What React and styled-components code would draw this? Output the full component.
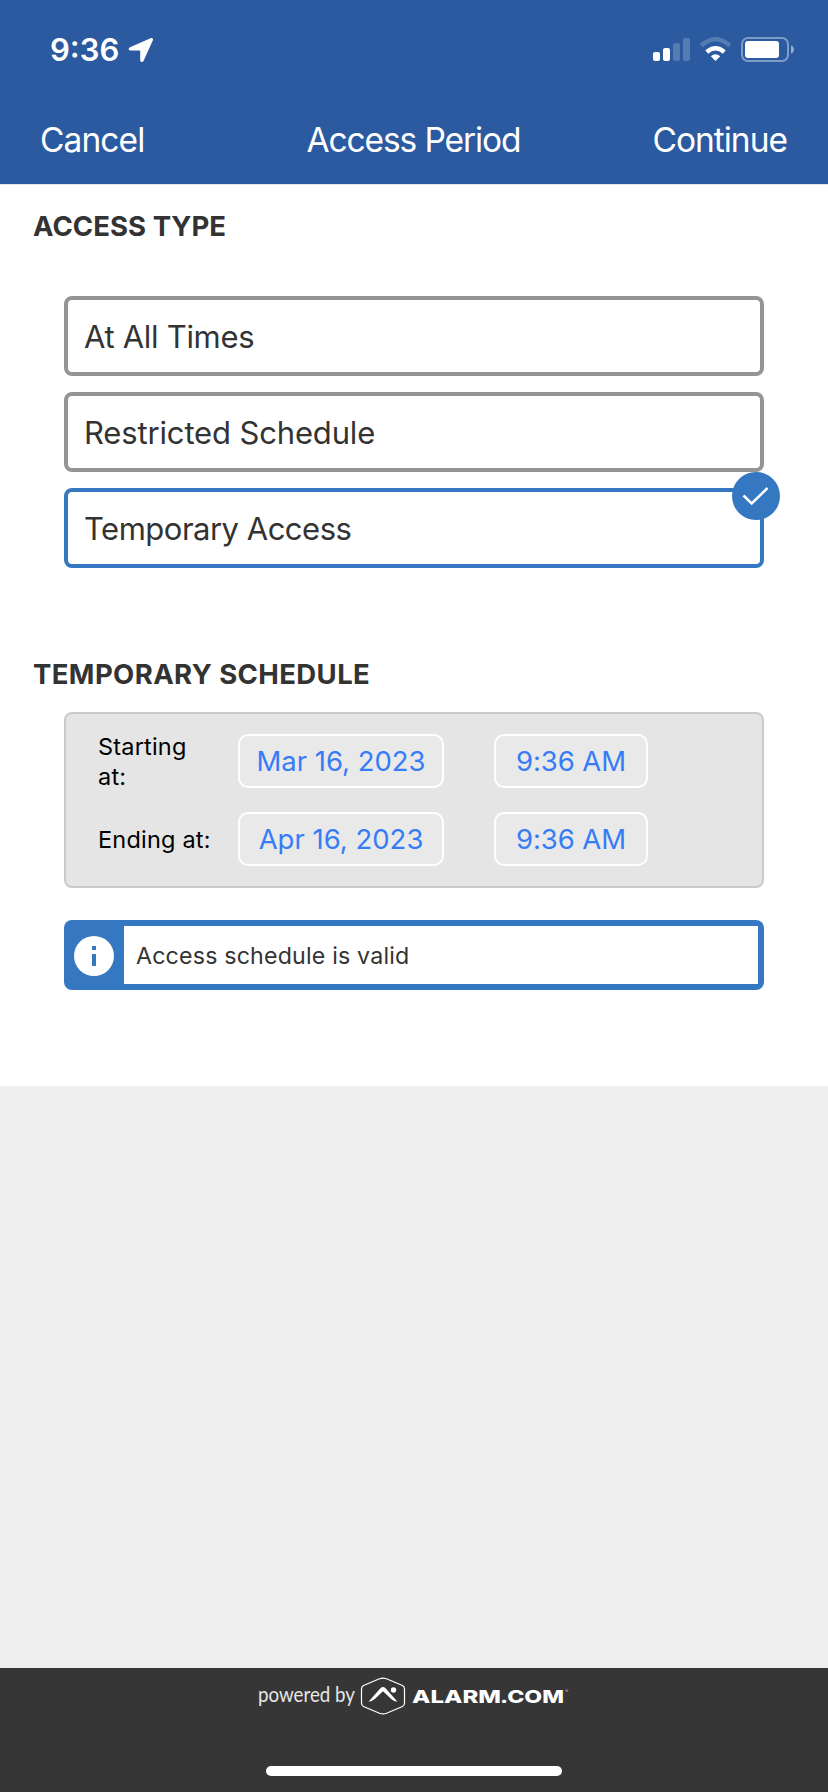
import React from 'react';
import styled, { createGlobalStyle } from 'styled-components';

const GlobalStyle = createGlobalStyle`
  * {
    box-sizing: border-box;
  }

  body {
    margin: 0;
    background: #efefef;
    color: #333;
    font-family: Inter, Roboto, sans-serif;
  }
`

const Screen = styled.div`
  width: 828px;
  height: 1792px;
  display: flex;
  flex-direction: column;
`

const Header = styled.header`
  height: 184px;
  background: #2b5aa0;
  color: #fff;
`

const StatusBar = styled.div`
  height: 97px;
  padding: 2px 33px 0 50px;
  display: flex;
  align-items: center;
  justify-content: space-between;
`

const Clock = styled.div`
  display: flex;
  align-items: center;
  gap: 9px;
  font-size: 31px;
  font-weight: 600;
  letter-spacing: 0;
`

const NavBar = styled.nav`
  height: 87px;
  padding: 0 41px 2px 40px;
  display: grid;
  grid-template-columns: 1fr auto 1fr;
  align-items: center;
  font-size: 33.5px;
  font-weight: 400;
`

const NavItem = styled.span`
  text-align: ${props => props.$align || 'left'};
  letter-spacing: ${props => props.$spacing};
  line-height: 40px;
`

const Content = styled.main`
  height: 902px;
  background: #fff;
  border-top: 1px solid #e4e6ea;
`

const SectionTitle = styled.h2`
  margin: 0;
  padding: ${props => props.$top} 0 0 33px;
  font-size: 27.5px;
  line-height: 34px;
  font-weight: 700;
  letter-spacing: ${props => props.$spacing};
`

const OptionList = styled.div`
  margin: 53px 64px 0;
  display: flex;
  flex-direction: column;
  gap: 16px;
`

const Option = styled.div`
  position: relative;
  height: 80px;
  padding-left: 16px;
  display: flex;
  align-items: center;
  border: 4px solid ${props => props.$selected ? '#3577c1' : '#949494'};
  border-radius: 8px;
  font-size: 31px;
  letter-spacing: ${props => props.$spacing};
`

const CheckBadge = styled.span`
  position: absolute;
  top: -20px;
  right: -20px;
  width: 48px;
  height: 48px;
  border-radius: 50%;
  background: #3577c1;

  svg {
    display: block;
  }
`

const SchedulePanel = styled.div`
  height: 176px;
  margin: 21px 64px 0;
  padding: 20px 0 0 32px;
  display: flex;
  flex-direction: column;
  gap: 24px;
  background: #e5e5e5;
  border: 2px solid #cacaca;
  border-radius: 8px;
`

const ScheduleRow = styled.div`
  height: 54px;
  display: flex;
  align-items: center;
`

const RowLabel = styled.div`
  width: 140px;
  padding: 2px 20px 0 0;
  color: #000;
  font-size: 23.5px;
  line-height: 30px;
  letter-spacing: 0.2px;
`

const Picker = styled.div`
  width: ${props => props.$width};
  height: 54px;
  margin-right: 50px;
  display: flex;
  align-items: center;
  justify-content: center;
  border: 2px solid #fff;
  border-radius: 10px;
  background: #e9e9e9;
  color: #357cf6;
  font-size: 27.5px;
  letter-spacing: ${props => props.$spacing};
`

const Notice = styled.div`
  height: 70px;
  margin: 32px 64px 0;
  padding: 6px 6px 6px 10px;
  display: flex;
  align-items: center;
  gap: 10px;
  border-radius: 8px;
  background: #3577c1;

  svg {
    margin-top: 2px;
  }
`

const NoticeText = styled.div`
  flex: 1;
  height: 58px;
  padding-left: 12px;
  background: #fff;
  font-size: 23.2px;
  line-height: 60px;
  letter-spacing: 0.18px;
`

const Footer = styled.footer`
  height: 124px;
  margin-top: auto;
  padding: 9px 0 16px;
  display: flex;
  flex-direction: column;
  align-items: center;
  justify-content: space-between;
  background: #363636;
`

const HomeIndicator = styled.div`
  width: 296px;
  height: 10px;
  border-radius: 5px;
  background: #fff;
`

function LocationArrow() {
  return (
    <svg width="26" height="26" viewBox="0 0 26 26" fill="#fff">
      <path d="M23.1 1.1 2 10.2C.1 11.1.4 13.4 2.3 13.4H11.6Q12.2 13.4 12.2 14V23.3C12.2 25.3 14.7 25.7 15.5 23.9L24.9 3.2C25.5 1.7 24.4.6 23.1 1.1Z" />
    </svg>
  )
}

function StatusIcons() {
  return (
    <svg width="142" height="26" viewBox="0 0 142 26">
      <g fill="#fff">
        <rect x="0" y="15" width="7" height="9" rx="2" />
        <rect x="10" y="11" width="7" height="13" rx="2" />
        <rect x="20" y="6" width="7" height="18" rx="2" opacity=".2" />
        <rect x="30" y="1" width="7" height="23" rx="2" opacity=".2" />
        <path d="M62.5 24 57.8 19.3Q62.5 15.3 67.2 19.3Z" />
      </g>
      <g fill="none" stroke="#fff" strokeWidth="4.4">
        <path d="M53.7 15Q62.5 7.4 71.3 15" />
        <path d="M48.2 8.7Q62.5-4.3 76.8 8.7" opacity=".2" />
      </g>
      <rect x="89" y="1" width="46" height="23" rx="6" fill="none" stroke="#fff" strokeWidth="2" opacity=".4" />
      <rect x="92" y="4" width="34" height="17" rx="3" fill="#fff" />
      <path d="M138 8.5C142 9.5 142 15.5 138 16.5Z" fill="#fff" opacity=".5" />
    </svg>
  )
}

function InfoIcon() {
  return (
    <svg width="40" height="40" viewBox="0 0 40 40">
      <circle cx="20" cy="20" r="20" fill="#fff" />
      <path d="M18 10h4v4h-4zM18 18h4v12h-4z" fill="#3577c1" />
    </svg>
  )
}

function PoweredBy() {
  return (
    <svg width="312" height="38" viewBox="0 0 312 38" fill="#fff">
      <text x="0" y="24.5" fontFamily="Lato, sans-serif" fontSize="20.5" fill="#e6e6e6" textLength="97" lengthAdjust="spacingAndGlyphs">powered by</text>
      <path d="M121.5 1.8 105.5 8.5Q103.5 9.5 103.5 12V26Q103.5 28.5 105.5 29.5L121.5 36.2Q125 37.5 128.5 36.2L144.5 29.5Q146.5 28.5 146.5 26V12Q146.5 9.5 144.5 8.5L128.5 1.8Q125 .5 121.5 1.8Z" fill="none" stroke="#fff" strokeWidth="1.2" />
      <path d="M110.5 24.8 122.4 11.3Q125 8.5 127.6 11.3L139.5 24.8Q136 24.6 133.2 22L125 14.2 116.8 22Q114 24.6 110.5 24.8Z" />
      <circle cx="135.5" cy="13" r="2.7" />
      <g fontFamily="Inter, sans-serif" fontWeight="800" fontSize="18">
        <text x="154" y="25.5" textLength="89" lengthAdjust="spacingAndGlyphs">ALARM</text>
        <text x="242" y="25.5" textLength="64" lengthAdjust="spacingAndGlyphs">.COM</text>
      </g>
      <text x="307" y="16" fontFamily="Inter, sans-serif" fontSize="5" opacity=".6">®</text>
    </svg>
  )
}

function ScheduleEntry(props) {
  return (
    <ScheduleRow>
      <RowLabel>{props.label}</RowLabel>
      <Picker $width="206px" $spacing="0">{props.date}</Picker>
      <Picker $width="154px" $spacing="-0.1px">{props.time}</Picker>
    </ScheduleRow>
  )
}

function App() {
  return (
    <>
      <GlobalStyle />
      <Screen>
        <Header>
          <StatusBar>
            <Clock>
              9:36
              <LocationArrow />
            </Clock>
            <StatusIcons />
          </StatusBar>
          <NavBar>
            <NavItem $spacing="-0.9px">Cancel</NavItem>
            <NavItem $spacing="-1.1px">Access Period</NavItem>
            <NavItem $align="right" $spacing="-1px">Continue</NavItem>
          </NavBar>
        </Header>
        <Content>
          <SectionTitle $top="24px" $spacing="0.05px">ACCESS TYPE</SectionTitle>
          <OptionList>
            <Option $spacing="-0.3px">At All Times</Option>
            <Option $spacing="-0.15px">Restricted Schedule</Option>
            <Option $spacing="-0.5px" $selected>
              Temporary Access
              <CheckBadge>
                <svg width="48" height="48" viewBox="0 0 48 48" fill="none" stroke="#fff" strokeWidth="2.5">
                  <path d="M11.5 23.5 19.7 31.5 35.5 16" />
                </svg>
              </CheckBadge>
            </Option>
          </OptionList>
          <SectionTitle $top="89px" $spacing="0.4px">TEMPORARY SCHEDULE</SectionTitle>
          <SchedulePanel>
            <ScheduleEntry label="Starting at:" date="Mar 16, 2023" time="9:36 AM" />
            <ScheduleEntry label="Ending at:" date="Apr 16, 2023" time="9:36 AM" />
          </SchedulePanel>
          <Notice>
            <InfoIcon />
            <NoticeText>Access schedule is valid</NoticeText>
          </Notice>
        </Content>
        <Footer>
          <PoweredBy />
          <HomeIndicator />
        </Footer>
      </Screen>
    </>
  )
}

export default App;
